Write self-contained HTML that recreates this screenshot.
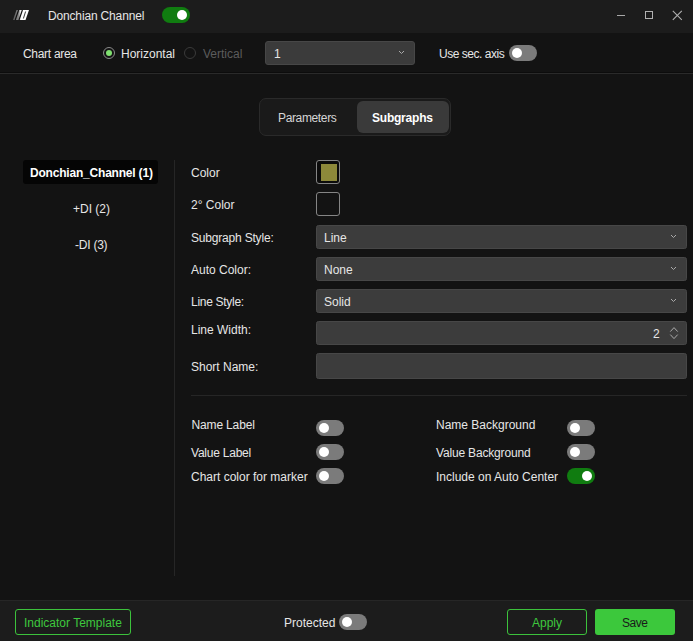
<!DOCTYPE html>
<html><head><meta charset="utf-8">
<style>
*{box-sizing:border-box;margin:0;padding:0}
html,body{width:693px;height:641px;overflow:hidden;background:#131313}
body{position:relative;font-family:"Liberation Sans",sans-serif;font-size:12px;color:#e6e6e6}
.a{position:absolute}
.t{position:absolute;line-height:14px;white-space:nowrap}
.tog{position:absolute;width:28px;height:16px;border-radius:8px;background:#7b7b7b}
.tog::after{content:"";position:absolute;left:3px;top:3px;width:10px;height:10px;border-radius:50%;background:#fff}
.tog.on{background:#107c10}
.tog.on::after{left:15px}
.dd{position:absolute;left:316px;width:371px;height:24px;background:#3c3c3c;border:1px solid #474747;border-radius:2.5px}
.chev{position:absolute;width:6px;height:4px}
</style></head><body>
<!-- title bar -->
<div class="a" style="left:0;top:0;width:693px;height:33px;background:#1c1c1c"></div>
<svg class="a" style="left:0;top:0" width="40" height="30" viewBox="0 0 40 30">
<defs><linearGradient id="lg" gradientUnits="userSpaceOnUse" x1="13" y1="0" x2="26" y2="0"><stop offset="0" stop-color="#5a5a5a"/><stop offset="0.45" stop-color="#8a8a8a"/><stop offset="0.6" stop-color="#fff"/><stop offset="1" stop-color="#fff"/></linearGradient></defs>
<path d="M16.5 10H29L25.5 20H13Z" fill="url(#lg)"/>
<path d="M18.6 10L15.2 20M22.4 10L19 20" stroke="#111" stroke-width="1.2"/>
<path d="M25.6 11.5L23.4 18.5" stroke="#222" stroke-width="0.9"/>
</svg>
<div class="t" style="left:48px;top:9px;letter-spacing:-0.16px">Donchian Channel</div>
<div class="tog on" style="left:162px;top:7px"></div>
<div class="a" style="left:617px;top:14.5px;width:8px;height:1.2px;background:#a8a8a8"></div>
<div class="a" style="left:645px;top:11px;width:8px;height:8px;border:1px solid #b0b0b0"></div>
<svg class="a" style="left:672px;top:10px" width="11" height="11" viewBox="0 0 11 11"><path d="M0.8 0.8L9.8 9.8M9.8 0.8L0.8 9.8" stroke="#b0b0b0" stroke-width="1.1"/></svg>

<!-- chart area row -->
<div class="t" style="left:23px;top:47px;letter-spacing:-0.3px">Chart area</div>
<div class="a" style="left:103px;top:47px;width:12px;height:12px;border-radius:50%;border:1px solid #8a8a8a"></div>
<div class="a" style="left:106px;top:50px;width:6px;height:6px;border-radius:50%;background:#80e070"></div>
<div class="t" style="left:121px;top:47px">Horizontal</div>
<div class="a" style="left:184px;top:47px;width:12px;height:12px;border-radius:50%;border:1px solid #3a3a3a"></div>
<div class="t" style="left:203px;top:47px;color:#5c5c5c">Vertical</div>
<div class="a" style="left:265px;top:41px;width:150px;height:24px;background:#3b3b3b;border:1px solid #474747;border-radius:3px"></div>
<div class="t" style="left:274px;top:47px">1</div>
<svg class="a" style="left:398px;top:50px" width="7" height="5" viewBox="0 0 7 5"><path d="M1 1l2.5 2.5L6 1" stroke="#aaa" fill="none" stroke-width="1"/></svg>
<div class="t" style="left:439px;top:47px;letter-spacing:-0.47px">Use sec. axis</div>
<div class="tog" style="left:508.5px;top:45px"></div>
<div class="a" style="left:0;top:72px;width:693px;height:1px;background:#0c0c0c"></div>
<div class="a" style="left:0;top:73px;width:693px;height:1px;background:#2a2a2a"></div>

<!-- tabs -->
<div class="a" style="left:259px;top:98px;width:192px;height:38px;border-radius:7px;background:#1a1a1a;border:1px solid #2a2a2a"></div>
<div class="a" style="left:356.5px;top:101px;width:92.5px;height:32px;border-radius:6px;background:#3a3a3a"></div>
<div class="t" style="left:278px;top:111px;color:#d6d6d6;letter-spacing:-0.36px">Parameters</div>
<div class="t" style="left:372px;top:111px;font-weight:bold;color:#fff;letter-spacing:-0.22px">Subgraphs</div>

<!-- left list -->
<div class="a" style="left:23px;top:160px;width:135px;height:24px;background:#050505;border-radius:3px"></div>
<div class="t" style="left:30px;top:166px;font-weight:bold;color:#fff;letter-spacing:-0.2px">Donchian_Channel (1)</div>
<div class="t" style="left:73px;top:202px">+DI (2)</div>
<div class="t" style="left:75px;top:238px;letter-spacing:-0.23px">-DI (3)</div>
<div class="a" style="left:174px;top:160px;width:1px;height:416px;background:#262626"></div>

<!-- form -->
<div class="t" style="left:191px;top:166px">Color</div>
<div class="a" style="left:316px;top:160px;width:24px;height:24px;border:1px solid #858585;border-radius:3px;background:#0b0b0b"></div>
<div class="a" style="left:320.5px;top:164px;width:16px;height:16.5px;background:#8d893a"></div>
<div class="t" style="left:191px;top:198px">2° Color</div>
<div class="a" style="left:316px;top:192px;width:24px;height:24px;border:1px solid #858585;border-radius:3px;background:#131313"></div>

<div class="t" style="left:191px;top:231px;letter-spacing:-0.19px">Subgraph Style:</div>
<div class="dd" style="top:225px"></div>
<div class="t" style="left:324px;top:231px">Line</div>
<svg class="a" style="left:670px;top:234px" width="7" height="5" viewBox="0 0 7 5"><path d="M1 1l2.5 2.5L6 1" stroke="#aaa" fill="none" stroke-width="1"/></svg>

<div class="t" style="left:191px;top:263px">Auto Color:</div>
<div class="dd" style="top:257px"></div>
<div class="t" style="left:324px;top:263px">None</div>
<svg class="a" style="left:670px;top:266px" width="7" height="5" viewBox="0 0 7 5"><path d="M1 1l2.5 2.5L6 1" stroke="#aaa" fill="none" stroke-width="1"/></svg>

<div class="t" style="left:191px;top:295px;letter-spacing:-0.29px">Line Style:</div>
<div class="dd" style="top:289px"></div>
<div class="t" style="left:324px;top:295px">Solid</div>
<svg class="a" style="left:670px;top:298px" width="7" height="5" viewBox="0 0 7 5"><path d="M1 1l2.5 2.5L6 1" stroke="#aaa" fill="none" stroke-width="1"/></svg>

<div class="t" style="left:191px;top:323px">Line Width:</div>
<div class="dd" style="top:321px"></div>
<div class="t" style="left:653px;top:327px">2</div>
<svg class="a" style="left:668px;top:326px" width="12" height="15" viewBox="0 0 12 15"><path d="M2.3 5.6L6 1.6L9.7 5.6M2.3 8.6L6 12.6L9.7 8.6" stroke="#aaa" fill="none" stroke-width="1"/></svg>

<div class="t" style="left:191px;top:360px">Short Name:</div>
<div class="dd" style="top:353px;height:26px"></div>

<div class="a" style="left:191px;top:395px;width:496px;height:1px;background:#262626"></div>

<div class="t" style="left:191.5px;top:418px;letter-spacing:-0.15px">Name Label</div>
<div class="tog" style="left:316px;top:420px"></div>
<div class="t" style="left:191px;top:446px;letter-spacing:-0.23px">Value Label</div>
<div class="tog" style="left:316px;top:444px"></div>
<div class="t" style="left:191px;top:470px">Chart color for marker</div>
<div class="tog" style="left:316px;top:468px"></div>

<div class="t" style="left:436px;top:418px">Name Background</div>
<div class="tog" style="left:567px;top:420px"></div>
<div class="t" style="left:436px;top:446px;letter-spacing:-0.17px">Value Background</div>
<div class="tog" style="left:567px;top:444px"></div>
<div class="t" style="left:436px;top:470px">Include on Auto Center</div>
<div class="tog on" style="left:567px;top:468px"></div>

<!-- footer -->
<div class="a" style="left:0;top:600px;width:693px;height:41px;background:#1c1c1c;border-top:1px solid #262626"></div>
<div class="a" style="left:15px;top:609px;width:116px;height:26px;border:1px solid #3cc23c;border-radius:3px"></div>
<div class="t" style="left:24px;top:616px;color:#3ec83e">Indicator Template</div>
<div class="t" style="left:284px;top:616px">Protected</div>
<div class="tog" style="left:338.7px;top:614px"></div>
<div class="a" style="left:507px;top:609px;width:80px;height:26px;border:1px solid #3cc23c;border-radius:3px"></div>
<div class="t" style="left:532px;top:616px;color:#3ec83e">Apply</div>
<div class="a" style="left:595px;top:609px;width:80px;height:26px;background:#3cc83c;border-radius:3px"></div>
<div class="t" style="left:622px;top:616px;color:#1a1a1a;letter-spacing:-0.45px">Save</div>
</body></html>
